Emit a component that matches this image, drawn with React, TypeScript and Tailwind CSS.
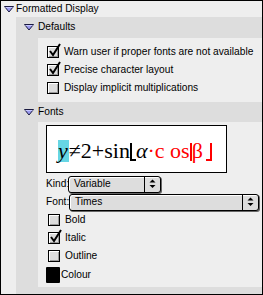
import React from "react";

function Tri() {
  return (
    <svg width="10" height="7" viewBox="0 0 10 7">
      <polygon points="0.5,0.5 9.5,0.5 5,6" fill="#9a9af0" stroke="#1a1a40" strokeWidth="1" />
      <line x1="1.5" y1="1.5" x2="8.5" y2="1.5" stroke="#c8c8ff" />
    </svg>
  );
}

function Check({ checked }: { checked?: boolean }) {
  return (
    <div className="relative w-[12px] h-[12px] shrink-0">
      <div className="w-[12px] h-[12px] border border-black bg-[#dcdcdc] shadow-[inset_1px_1px_0_#fff,inset_-1px_-1px_0_#999]" />
      {checked && (
        <svg className="absolute left-[1px] top-[-3px]" width="13" height="14" viewBox="0 0 13 14">
          <path d="M2 8 L5 12 L12 1" fill="none" stroke="#000" strokeWidth="2" />
        </svg>
      )}
    </div>
  );
}

function Row({ label, checked }: { label: string; checked?: boolean }) {
  return (
    <div className="h-[18px] flex items-center gap-[5px]">
      <Check checked={checked} />
      <span className="whitespace-nowrap">{label}</span>
    </div>
  );
}

function Arrows() {
  return (
    <svg width="7" height="10" viewBox="0 0 7 10">
      <polygon points="3.5,0.5 6.5,3.5 0.5,3.5" fill="#000" />
      <polygon points="0.5,6 6.5,6 3.5,9" fill="#000" />
    </svg>
  );
}

function Select({ value, width }: { value: string; width: string }) {
  return (
    <div className={`${width} shrink-0 h-[17px] flex items-center rounded-[3px] border border-black bg-[#dddddd] shadow-[inset_1px_1px_0_#fff,1px_1px_0_#666]`}>
      <span className="flex-1 pl-[5px]">{value}</span>
      <div className="w-[16px] h-full border-l border-black flex items-center justify-center">
        <Arrows />
      </div>
    </div>
  );
}

export default function App() {
  return (
    <div className="w-[263px] h-[295px] border border-black bg-[#eeeeee] text-[10.2px] text-black font-['Liberation_Sans',Arial,sans-serif] leading-none overflow-hidden flex flex-col">
      {/* Formatted Display */}
      <div className="h-[16px] flex items-center shrink-0">
        <div className="w-[12px] ml-[3px] flex"><Tri /></div>
        <span>Formatted Display</span>
      </div>

      <div className="ml-[15px] bg-[#dddddd] flex-1 flex flex-col">
        {/* Defaults */}
        <div className="h-[21px] flex items-center shrink-0 pl-[8px]">
          <div className="w-[14px] flex"><Tri /></div>
          <span>Defaults</span>
        </div>
        <div className="ml-[22px] h-[64px] bg-[#eeeeee] pl-[9px] pt-[5px] flex flex-col">
          <Row label="Warn user if proper fonts are not available" checked />
          <Row label="Precise character layout" checked />
          <Row label="Display implicit multiplications" />
        </div>

        {/* Fonts */}
        <div className="h-[20px] flex items-center shrink-0 pl-[8px]">
          <div className="w-[14px] flex"><Tri /></div>
          <span>Fonts</span>
        </div>
        <div className="ml-[22px] h-[165px] bg-[#eeeeee] pl-[8px] pt-[3px] flex flex-col">
          <div className="w-[181px] h-[48px] border border-black bg-white flex items-center pl-[11px] pt-[3px] font-['Liberation_Serif',serif] text-[22px] whitespace-nowrap">
            <span className="italic bg-[#66d6e4] pr-[1px]">y</span>
            <span>≠2+sin</span>
            <span className="inline-block w-[6px] h-[18px] border-l-2 border-b-2 border-black mt-[2px]" />
            <span className="italic">α</span>
            <span className="text-[#ff0000]">·c os</span>
            <span className="inline-block w-[2px] h-[18px] bg-[#ff0000] mt-[2px]" />
            <span className="text-[#ff0000]">β</span>
            <span className="inline-block w-[6px] h-[18px] border-r-2 border-b-2 border-[#ff0000] mt-[2px] ml-[3px]" />
          </div>
          <div className="h-[18px] mt-[2px] flex items-center">
            <span className="w-[22px] shrink-0 whitespace-nowrap">Kind:</span>
            <Select value="Variable" width="w-[93px]" />
          </div>
          <div className="h-[18px] flex items-center">
            <span className="w-[23px] shrink-0 whitespace-nowrap">Font:</span>
            <Select value="Times" width="w-[190px]" />
          </div>
          <div className="pl-[2px] flex flex-col">
            <Row label="Bold" />
            <Row label="Italic" checked />
            <Row label="Outline" />
          </div>
          <div className="h-[20px] flex items-center">
            <div className="w-[14px] h-[16px] bg-black rounded-[1px]" />
            <span className="ml-[1px]">Colour</span>
          </div>
        </div>
      </div>
    </div>
  );
}
